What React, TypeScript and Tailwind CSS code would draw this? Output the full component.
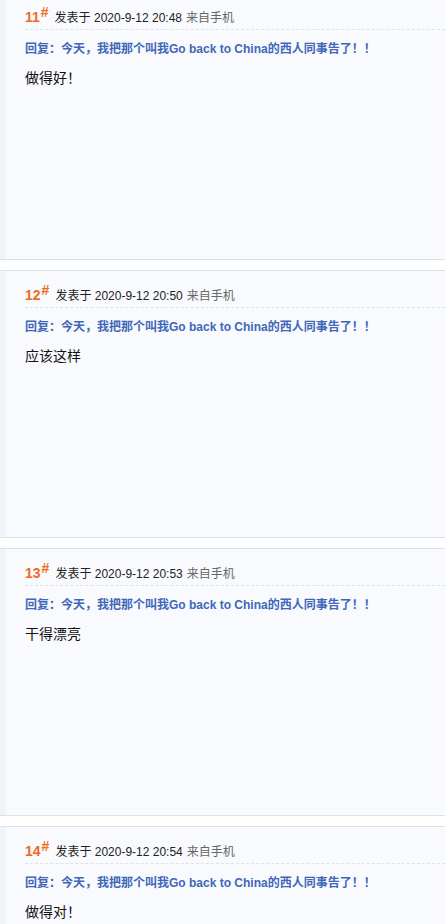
const posts = [
  { floor: 11, time: "2020-9-12 20:48", text: "做得好！" },
  { floor: 12, time: "2020-9-12 20:50", text: "应该这样" },
  { floor: 13, time: "2020-9-12 20:53", text: "干得漂亮" },
  { floor: 14, time: "2020-9-12 20:54", text: "做得对！" },
];

const font = { fontFamily: '"Liberation Sans", "Noto Sans CJK SC", sans-serif' };

function Post({ floor, time, text }: { floor: number; time: string; text: string }) {
  return (
    <div className="flex h-[268px] border-y border-[#d8e4e8] bg-[#f9fafd] mb-[10px]">
      <div className="w-[6px] shrink-0 bg-[#eef4f8]" />
      <div className="flex-1 pl-[19px]">
        <div className="flex items-baseline pt-[14px] pb-[2px] h-[37px] border-b border-dashed border-[#dde3ea] text-[12px] leading-[20px]">
          <span className="font-bold text-[14px] text-[#ef6a22]">{floor}</span>
          <span className="font-bold text-[14px] text-[#ef6a22] relative -top-[5px] ml-[1px] leading-none">#</span>
          <span className="ml-[6px] text-[#222]">发表于 {time}</span>
          <span className="ml-[4px] text-[#666]">来自手机</span>
        </div>
        <div className="mt-[9px] text-[12px] leading-[20px] font-bold text-[#3f67b9]">
          回复：今天，我把那个叫我Go back to China的西人同事告了！！
        </div>
        <div className="mt-[9px] text-[14px] leading-[20px] text-[#111]">{text}</div>
      </div>
    </div>
  );
}

export default function App() {
  return (
    <div className="bg-white w-[445px] h-[924px] overflow-hidden" style={font}>
      <div className="-mt-[8px]">
        {posts.map((p) => (
          <Post key={p.floor} {...p} />
        ))}
      </div>
    </div>
  );
}
